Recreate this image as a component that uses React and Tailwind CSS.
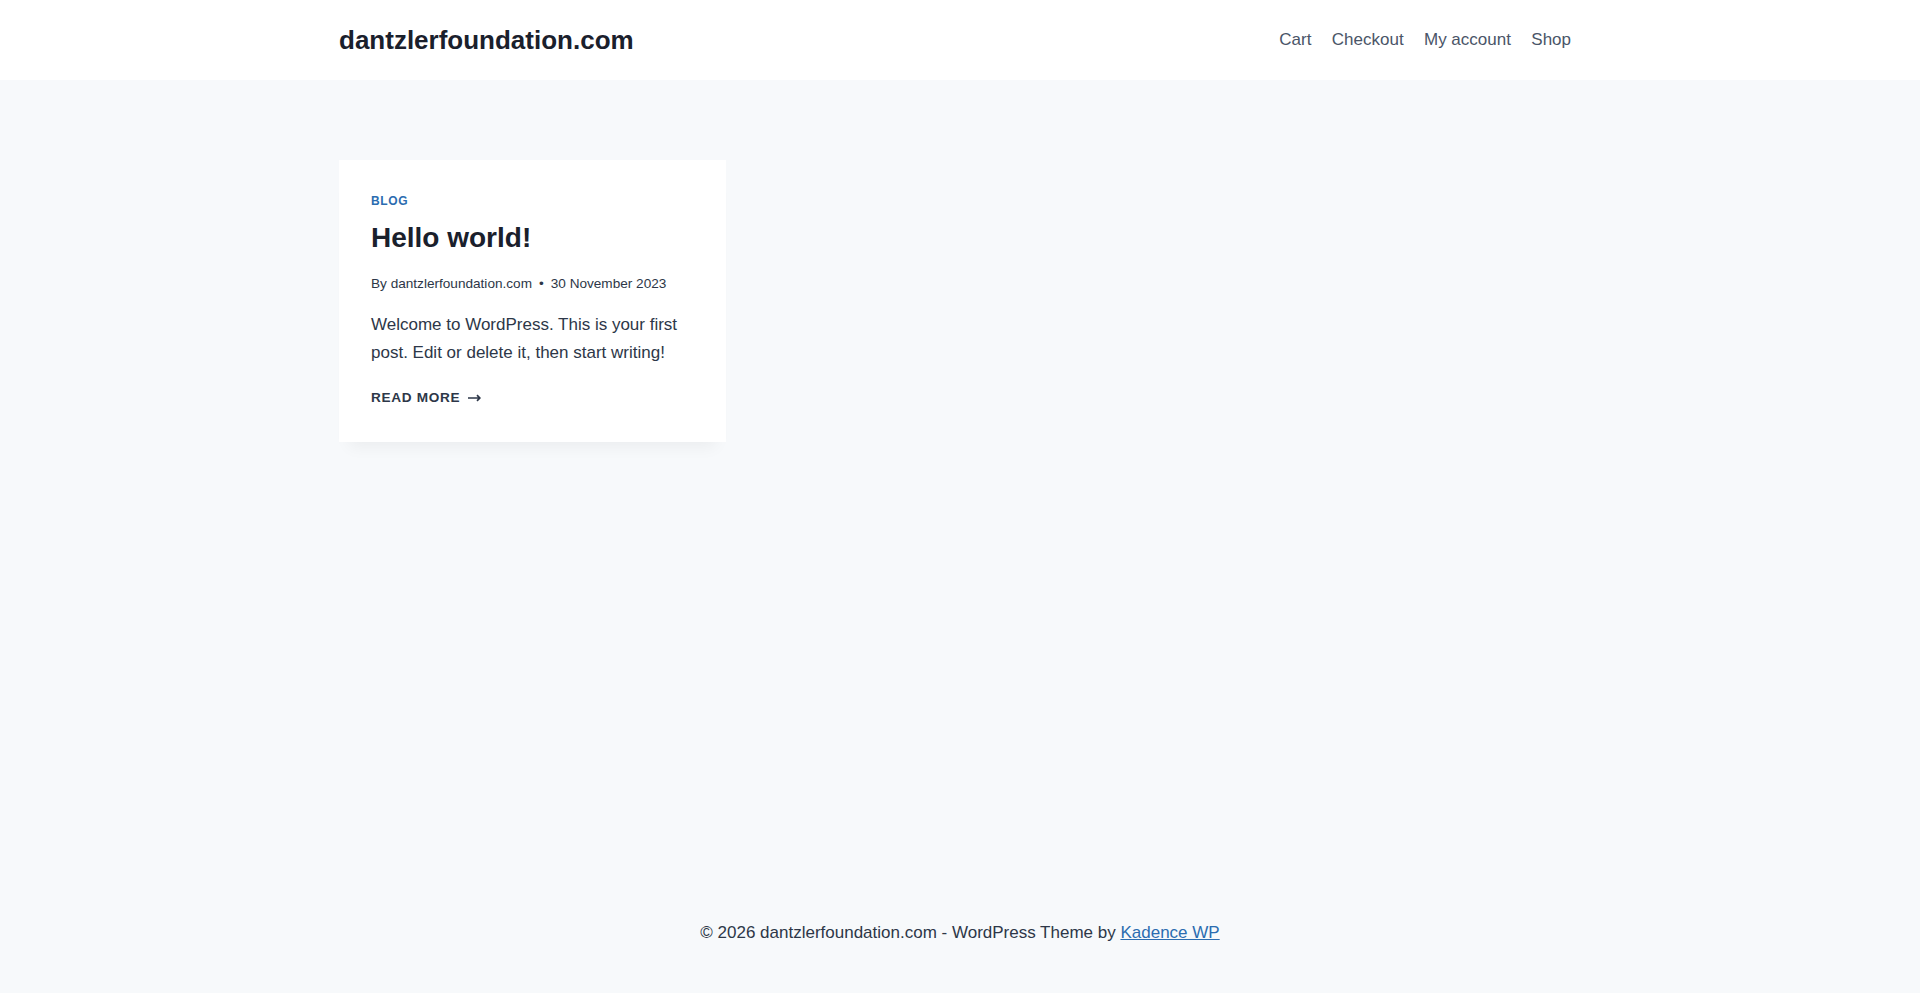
import React from 'react';

// Barra superior com logo e menu
const Header = () => {
  const links = ['Cart', 'Checkout', 'My account', 'Shop'];
  return (
    <header className="bg-white">
      <div className="mx-auto flex h-[80px] w-full max-w-[1290px] items-center justify-between px-6">
        <a href="#" className="text-[26px] font-bold leading-none text-[#1A202C]">
          dantzlerfoundation.com
        </a>
        <nav className="flex items-center">
          {links.map((l) => (
            <a key={l} href="#" className="px-[10.2px] text-[17px] leading-[1.6] text-[#4A5568] last:pr-[10px]">
              {l}
            </a>
          ))}
        </nav>
      </div>
    </header>
  );
};

// Card do post
const PostCard = () => (
  <article className="bg-white px-8 pb-[33px] pt-[33px] shadow-[0_15px_15px_-10px_rgba(0,0,0,0.05)]">
    <div className="text-[12px] font-bold uppercase leading-4 tracking-[0.05em] text-[#2B6CB0]">
      <a href="#">Blog</a>
    </div>
    <h2 className="mt-2 text-[28px] font-bold leading-[42px] text-[#1A202C]">Hello world!</h2>
    <div className="mt-[14px] flex items-center text-[13.6px] leading-[22px] text-[#2D3748]">
      <span>By dantzlerfoundation.com</span>
      <span className="mx-[7px] text-[13.6px]">•</span>
      <span>30 November 2023</span>
    </div>
    <p className="mt-4 text-[17px] leading-[28px] text-[#2D3748]">
      Welcome to WordPress. This is your first post. Edit or delete it, then start writing!
    </p>
    <a href="#" className="mt-5 flex items-center text-[13.6px] font-bold uppercase leading-[22px] tracking-[0.05em] text-[#2D3748]">
      Read more
      <svg className="ml-[8px]" width="13" height="8" viewBox="0 0 13 8" fill="none">
        <path d="M0 4h11.5M9 1.2 11.8 4 9 6.8" stroke="#2D3748" strokeWidth="1.7" />
      </svg>
    </a>
  </article>
);

export default function App() {
  return (
    <div
      className="flex min-h-screen flex-col bg-[#F7F9FB]"
      style={{ fontFamily: '"Liberation Sans", Arial, sans-serif' }}
    >
      <Header />
      <main className="flex-1 pt-[80px]">
        <div className="mx-auto grid w-full max-w-[1290px] grid-cols-3 gap-10 px-6">
          <PostCard />
        </div>
      </main>
      <footer className="pb-[47px] pt-[30px]">
        <p className="text-center text-[17px] leading-[27px] text-[#2D3748]">
          © 2026 dantzlerfoundation.com - WordPress Theme by{' '}
          <a href="#" className="text-[#2B6CB0] underline">Kadence WP</a>
        </p>
      </footer>
    </div>
  );
}
